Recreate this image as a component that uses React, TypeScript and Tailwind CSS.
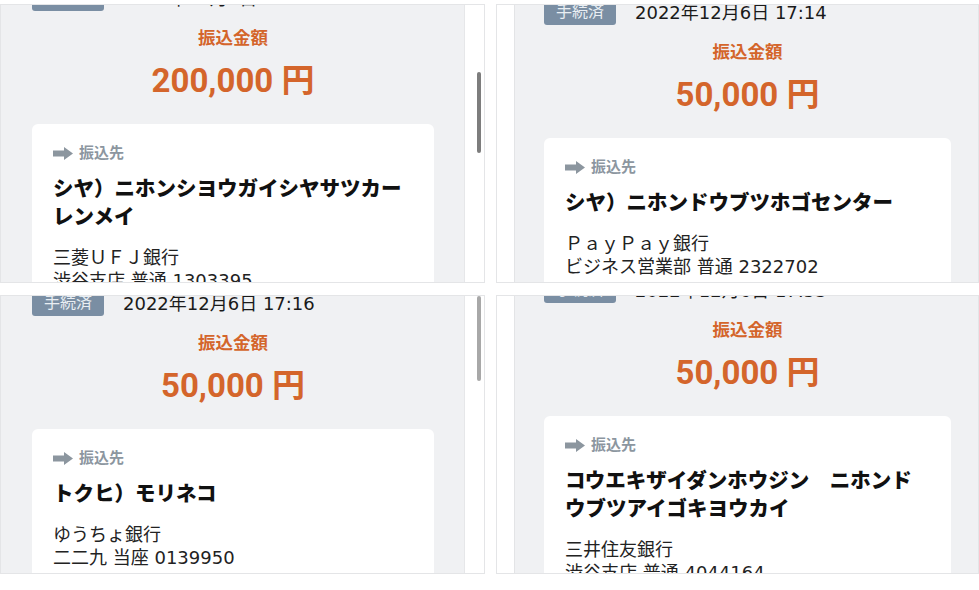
import React from 'react';

type Transfer = {
  id: string;
  side: 'left' | 'right';
  offset: string;
  date: string;
  amount: string;
  name: string[];
  bank: string;
  branch: string;
  thumb?: string;
};

const transfers: Transfer[] = [
  {
    id: 'tl',
    side: 'left',
    offset: 'mt-[-19px]',
    date: '2022年12月6日 17:03',
    amount: '200,000',
    name: ['シヤ）ニホンシヨウガイシヤサツカー', 'レンメイ'],
    bank: '三菱ＵＦＪ銀行',
    branch: '渋谷支店 普通 1303395',
    thumb: 'mt-[67px] h-[81px] bg-[#7d7d7d]',
  },
  {
    id: 'tr',
    side: 'right',
    offset: 'mt-[-5px]',
    date: '2022年12月6日 17:14',
    amount: '50,000',
    name: ['シヤ）ニホンドウブツホゴセンター'],
    bank: 'ＰａｙＰａｙ銀行',
    branch: 'ビジネス営業部 普通 2322702',
  },
  {
    id: 'bl',
    side: 'left',
    offset: 'mt-[-5px]',
    date: '2022年12月6日 17:16',
    amount: '50,000',
    name: ['トクヒ）モリネコ'],
    bank: 'ゆうちょ銀行',
    branch: '二二九 当座 0139950',
    thumb: 'mt-0 h-[85px] bg-[#a8a8a8]',
  },
  {
    id: 'br',
    side: 'right',
    offset: 'mt-[-18px]',
    date: '2022年12月6日 17:53',
    amount: '50,000',
    name: ['コウエキザイダンホウジン　ニホンド', 'ウブツアイゴキヨウカイ'],
    bank: '三井住友銀行',
    branch: '渋谷支店 普通 4044164',
  },
];

const bodyFont = "font-['DejaVu_Sans','Noto_Sans_CJK_JP',sans-serif]";

function ArrowIcon() {
  return (
    <svg width="20" height="13" viewBox="0 0 20 13">
      <path d="M0 3.5h11V0l9 6.5-9 6.5V9.5H0z" fill="#8c969f" />
    </svg>
  );
}

function TransferBody({ t }: { t: Transfer }) {
  return (
    <div className={`flex flex-col ${t.offset}`}>
      <div className="flex items-center h-[24px] gap-[19px] shrink-0">
        <span className="h-[25px] w-[72px] rounded-[3px] bg-[#7a8ea3] text-[#e9eef3] text-[16px] flex items-center justify-center">
          手続済
        </span>
        <span className={`text-[18px] text-[#1a1a1a] whitespace-nowrap ${bodyFont}`}>{t.date}</span>
      </div>
      <div className="mt-[16px] text-center text-[17.5px] leading-[24px] font-bold text-[#d4652b]">
        振込金額
      </div>
      <div className="mt-[11px] text-center text-[33px] leading-[40px] font-bold text-[#d4652b]">
        {t.amount} 円
      </div>
      <div className="mt-[23px] bg-white rounded-[6px] pl-[21px] pr-[16px] pt-[19px] pb-[40px]">
        <div className="flex items-center gap-[6px] h-[20px] text-[15px] font-bold text-[#8c969f]">
          <ArrowIcon />
          <span>振込先</span>
        </div>
        <div className="mt-[12px] text-[20.5px] leading-[28px] font-black text-[#111] whitespace-nowrap">
          {t.name.map(line => (
            <div key={line}>{line}</div>
          ))}
        </div>
        <div className={`mt-[15px] text-[18px] leading-[23px] text-[#222] whitespace-nowrap ${bodyFont}`}>
          <div>{t.bank}</div>
          <div>{t.branch}</div>
        </div>
      </div>
    </div>
  );
}

function Panel({ t }: { t: Transfer }) {
  if (t.side === 'left') {
    return (
      <div className="h-[279px] border border-[#e4e5e7] flex overflow-hidden">
        <div className="w-[464px] bg-[#f0f1f3] pl-[31px] pr-[30px] overflow-hidden border-r border-[#e6e7e9]">
          <TransferBody t={t} />
        </div>
        <div className="flex-1 bg-white flex justify-end pr-[3px]">
          <div className={`w-[4px] rounded-full ${t.thumb}`} />
        </div>
      </div>
    );
  }
  return (
    <div className="h-[279px] border border-[#e4e5e7] flex overflow-hidden">
      <div className="w-[18px] bg-white border-r border-[#e3e4e6]" />
      <div className="flex-1 bg-[#f0f1f3] pl-[29px] pr-[27px] overflow-hidden">
        <TransferBody t={t} />
      </div>
    </div>
  );
}

export default function App() {
  return (
    <div className="w-[979px] h-[590px] bg-white overflow-hidden pt-[4px] font-['Roboto','Noto_Sans_CJK_JP',sans-serif]">
      <div className="grid grid-cols-[485px_483px] grid-rows-[279px_279px] gap-x-[11px] gap-y-[12px]">
        {transfers.map(t => (
          <Panel key={t.id} t={t} />
        ))}
      </div>
    </div>
  );
}
